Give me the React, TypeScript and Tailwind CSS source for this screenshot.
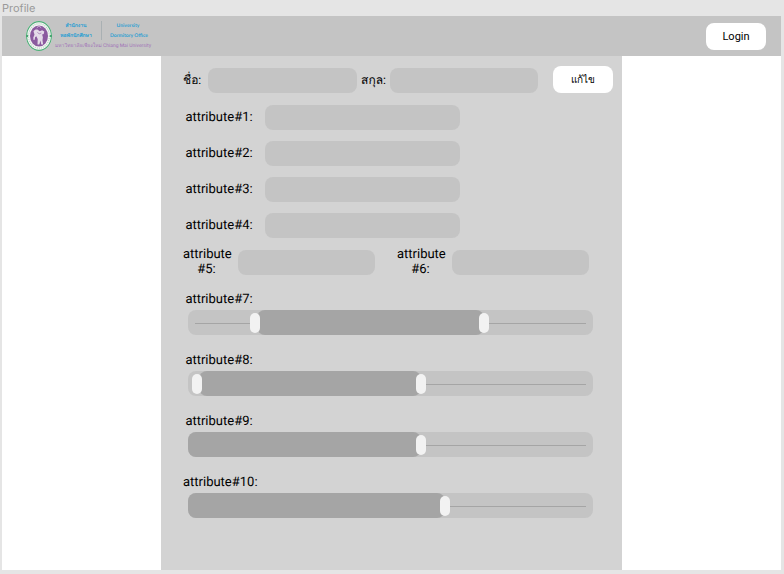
import { useState } from "react";

const FIELD =
  "h-[25px] min-w-0 rounded-lg bg-[#c4c4c4] px-2 text-[13px] text-black outline-none";

const THUMB =
  "pointer-events-none absolute inset-0 m-0 h-full w-full appearance-none bg-transparent outline-none [&::-webkit-slider-runnable-track]:bg-transparent [&::-webkit-slider-thumb]:pointer-events-auto [&::-webkit-slider-thumb]:h-5 [&::-webkit-slider-thumb]:w-2.5 [&::-webkit-slider-thumb]:cursor-pointer [&::-webkit-slider-thumb]:appearance-none [&::-webkit-slider-thumb]:rounded-[5px] [&::-webkit-slider-thumb]:bg-[#f2f2f2]";

function Logo() {
  return (
    <svg
      viewBox="0 0 136 36"
      className="h-9 w-[136px] shrink-0"
      role="img"
      aria-label="Chiang Mai University Dormitory Office"
    >
      <ellipse cx="17" cy="18" rx="13" ry="15" fill="#f4f4f4" />
      <ellipse cx="17" cy="18" rx="12.4" ry="14.4" fill="none" stroke="#4fae78" strokeWidth="1.1" />
      <ellipse cx="17" cy="18" rx="10.4" ry="12.2" fill="none" stroke="#b5d3c2" strokeWidth="1.2" strokeDasharray="1 1.1" />
      <ellipse cx="17" cy="18" rx="9" ry="10.6" fill="#8b5a9f" />
      <path
        d="M11.5 13.2c1.2-1.6 3-2 4.6-1.2l1.6 1.2 2.4-1 2.2 1.2-.6 2.6-1.6.6.8 2.6-.4 3 .6 4.2h-1.8l-.8-3.8-1.2 3.8h-1.8l.2-5.4-1.4-2.8-1.2 1-.4 2.6-1.2.2-.2-2.4 1.2-2.8z"
        fill="#e4dae8"
      />
      <path d="M14.8 9.8l2.2-2 2.2 2" fill="none" stroke="#dfcae5" strokeWidth=".8" />
      <path d="M15.4 14.4l1.8 1.4 2.2-.8" fill="none" stroke="#8b5a9f" strokeWidth=".6" />
      <circle cx="5.2" cy="18" r="1" fill="#379c62" />
      <circle cx="28.8" cy="18" r="1" fill="#379c62" />
      <path d="M79.5 3v19" stroke="#a9b0b3" strokeWidth="1" />
      <g fill="#2c9fd3" fontSize="5" fontWeight="700" textAnchor="middle" fontFamily="Lato, sans-serif">
        <text x="54" y="9">สำนักงาน</text>
        <text x="54" y="19">หอพักนักศึกษา</text>
        <text x="106" y="9">University</text>
        <text x="107" y="19">Dormitory Office</text>
      </g>
      <g fill="#a274b8" fontSize="5" fontFamily="Roboto, sans-serif">
        <text x="33" y="29">มหาวิทยาลัยเชียงใหม่</text>
        <text x="81" y="29">Chiang Mai University</text>
      </g>
    </svg>
  );
}

function TextRow({ name }: { name: string }) {
  return (
    <div className="flex items-center">
      <label htmlFor={name} className="w-[72px] shrink-0 text-center">
        {name}:
      </label>
      <input id={name} className={`${FIELD} ml-2.5 w-[195px]`} />
    </div>
  );
}

function StackedField({ name, number }: { name: string; number: number }) {
  const id = `${name}-${number}`;
  return (
    <div className="flex items-center gap-2">
      <label htmlFor={id} className="w-[47px] shrink-0 text-center">
        {name} #{number}:
      </label>
      <input id={id} className={`${FIELD} w-[137px]`} />
    </div>
  );
}

function position(value: number, shift: number) {
  return `calc(${5 + shift}px + (100% - 10px) * ${value / 1000})`;
}

function SliderRow({ name, start, end }: { name: string; start?: number; end: number }) {
  const [low, setLow] = useState(start);
  const [high, setHigh] = useState(end);
  const left = low === undefined ? "0px" : position(low, 2);

  return (
    <div className="flex flex-col gap-[3px]">
      <label htmlFor={name} className="w-[72px] text-center">
        {name}:
      </label>
      <div className="relative mr-[7px] ml-[5px] h-[25px] rounded-lg bg-[#c4c4c4]">
        <div className="absolute inset-x-[7px] top-[13px] h-px bg-[#a5a5a5]" />
        <div
          className="absolute inset-y-0 rounded-lg bg-[#a5a5a5]"
          style={{ left, width: `calc(${position(high, 0)} - ${left})` }}
        />
        {low !== undefined && (
          <input
            type="range"
            aria-label={`${name} minimum`}
            min={0}
            max={1000}
            value={low}
            onChange={(e) => setLow(Math.min(Number(e.target.value), high))}
            className={THUMB}
          />
        )}
        <input
          id={name}
          type="range"
          min={0}
          max={1000}
          value={high}
          onChange={(e) => setHigh(Math.max(Number(e.target.value), low ?? 0))}
          className={THUMB}
        />
      </div>
    </div>
  );
}

export default function App() {
  return (
    <div className="flex min-h-screen flex-col bg-[#e5e5e5] pr-[3px] pb-1 pl-0.5 font-[Roboto,sans-serif] text-[13px] leading-[15px] text-black [text-rendering:geometricPrecision]">
      <div className="h-4 font-[Inter,sans-serif] text-[11px] leading-4 text-[#999]">Profile</div>
      <div className="flex grow flex-col bg-white">
        <header className="flex h-10 items-center justify-between bg-[#c4c4c4] pr-[15px] pl-5">
          <Logo />
          <button type="button" className="h-[27px] w-[60px] rounded-lg bg-white text-[11px]">
            Login
          </button>
        </header>
        <main className="mx-auto w-full max-w-[461px] grow bg-[#d3d3d3] px-[22px] pt-2.5 pb-4">
          <div className="-mr-[13px] flex items-end">
            <label htmlFor="first-name" className="w-[25px] shrink-0 pb-[5px] text-[12px] whitespace-nowrap">
              ชื่อ:
            </label>
            <input id="first-name" className={`${FIELD} w-[149px]`} />
            <label htmlFor="last-name" className="w-[33px] shrink-0 pb-[5px] text-center text-[12px] whitespace-nowrap">
              สกุล:
            </label>
            <input id="last-name" className={`${FIELD} w-[148px]`} />
            <button type="button" className="ml-auto h-[27px] w-[60px] shrink-0 rounded-lg bg-white text-[10px]">
              แก้ไข
            </button>
          </div>
          <div className="mt-3 flex flex-col gap-[11px]">
            <TextRow name="attribute#1" />
            <TextRow name="attribute#2" />
            <TextRow name="attribute#3" />
            <TextRow name="attribute#4" />
          </div>
          <div className="mt-[9px] flex gap-[22px]">
            <StackedField name="attribute" number={5} />
            <StackedField name="attribute" number={6} />
          </div>
          <div className="mt-[15px] flex flex-col gap-[18px]">
            <SliderRow name="attribute#7" start={158} end={737} />
            <SliderRow name="attribute#8" start={11} end={576} />
            <SliderRow name="attribute#9" end={576} />
            <SliderRow name="attribute#10" end={637} />
          </div>
        </main>
      </div>
    </div>
  );
}
